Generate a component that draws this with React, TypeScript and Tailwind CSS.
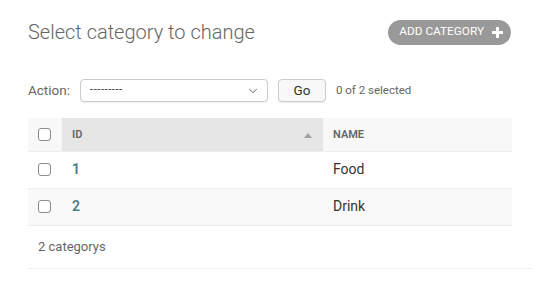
import { ChevronDown } from 'lucide-react';

const rows = [
  { id: 1, name: 'Food' },
  { id: 2, name: 'Drink' },
];

function Checkbox() {
  return <span className="block h-[13px] w-[13px] rounded-[3px] border border-[#8a8a8a] bg-white" />;
}

export default function App() {
  return (
    <div
      className="h-[301px] w-[540px] bg-white pl-[28px] pr-[8px] text-[#333]"
      style={{ fontFamily: 'Roboto, "Liberation Sans", sans-serif' }}
    >
      {/* Header */}
      <div className="flex h-[62px] w-[483px] items-center justify-between pt-[2px]">
        <h1 className="text-[20px] font-light text-[#666]">Select category to change</h1>
        <button className="flex h-[25px] items-center gap-[8px] rounded-full bg-[#999] pl-[11px] pr-[8px] text-[11.8px] font-normal uppercase text-white">
          Add category
          <svg width="11" height="11" viewBox="0 0 11 11">
            <path d="M5.5 1 V10 M1 5.5 H10" stroke="white" strokeWidth="3" strokeLinecap="round" />
          </svg>
        </button>
      </div>

      {/* Actions */}
      <div className="mt-[17px] flex h-[23px] items-center text-[13px]">
        <span className="text-[13.5px] text-[#666]">Action:</span>
        <div className="ml-[10px] flex h-[23px] w-[188px] items-center justify-between rounded-[4px] border border-[#ccc] bg-white pl-[9px] pr-[7px] shadow-[0_1px_1px_rgba(0,0,0,0.06)]">
          <span className="text-[11px] tracking-[0.6px] text-[#333]">---------</span>
          <ChevronDown size={14} strokeWidth={1.6} className="text-[#555]" />
        </div>
        <button className="ml-[10px] flex h-[23px] w-[48px] items-center justify-center rounded-[4px] border border-[#ccc] bg-[#f8f8f8] text-[13.5px] text-[#333] shadow-[0_1px_1px_rgba(0,0,0,0.08)]">
          Go
        </button>
        <span className="ml-[10px] text-[11.5px] text-[#666]">0 of 2 selected</span>
      </div>

      {/* Results */}
      <table className="mt-[16px] w-[484px] border-collapse text-[13px]">
        <thead>
          <tr className="h-[33px] border-b border-[#eee] text-[11px] font-semibold uppercase text-[#666]">
            <th className="w-[34px] bg-[#f8f8f8] pl-[10px] text-left align-middle">
              <Checkbox />
            </th>
            <th className="w-[261px] bg-[#e6e6e6] pl-[10px] pr-[8px] pt-[2px] text-left font-semibold">
              <div className="flex items-center justify-between">
                <span>ID</span>
                <svg width="8" height="5" viewBox="0 0 8 5" className="mr-[3px]">
                  <path d="M0 5 L4 0 L8 5 Z" fill="#a0a0a0" />
                </svg>
              </div>
            </th>
            <th className="bg-[#f8f8f8] pl-[10px] pt-[2px] text-left font-semibold">Name</th>
          </tr>
        </thead>
        <tbody>
          {rows.map((r, i) => (
            <tr key={r.id} className={`h-[37px] border-b border-[#eee] ${i % 2 === 1 ? 'bg-[#f9f9f9]' : 'bg-white'}`}>
              <td className="pl-[10px] align-middle">
                <Checkbox />
              </td>
              <td className="pl-[10px] text-[14px] font-semibold text-[#467a86]">{r.id}</td>
              <td className="pl-[10px] text-[14px] text-[#333]">{r.name}</td>
            </tr>
          ))}
        </tbody>
      </table>

      {/* Paginator */}
      <div className="flex h-[43px] items-center border-b border-[#eee] pl-[10px] text-[13px] text-[#666]">
        2 categorys
      </div>
    </div>
  );
}
